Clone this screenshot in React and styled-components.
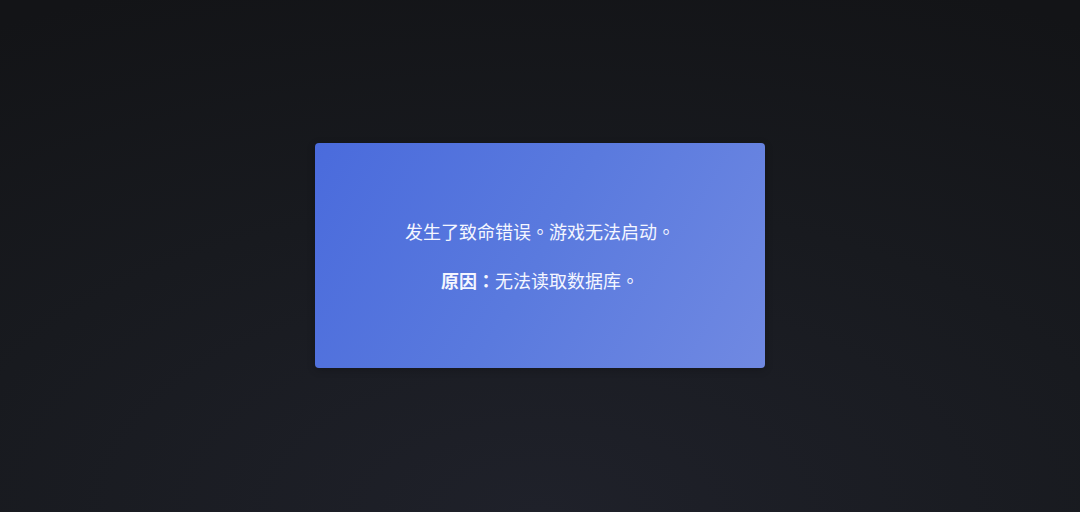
import React from 'react';
import styled, { createGlobalStyle } from 'styled-components';

const GlobalStyle = createGlobalStyle`
  html, body {
    margin: 0;
    padding: 0;
    height: 100%;
  }
  body {
    font-family: "Noto Sans", "Noto Sans CJK TC", sans-serif;
    background: #141518;
  }
  #root {
    height: 100%;
  }
`;

export default function App() {
  return (
    <>
      <GlobalStyle />
      <Screen>
        <ErrorCard>
          <Message>发生了致命错误。游戏无法启动。</Message>
          <Message>
            <Label>原因：</Label>无法读取数据库。
          </Message>
        </ErrorCard>
      </Screen>
    </>
  );
}

const Screen = styled.div`
  width: 100vw;
  height: 100vh;
  display: flex;
  align-items: center;
  justify-content: center;
  background: radial-gradient(ellipse 100% 110% at 50% 100%, #1f212a 0%, #181a1f 55%, #131417 100%);
`;

const ErrorCard = styled.div`
  width: 450px;
  height: 225px;
  margin-top: -1px;
  box-sizing: border-box;
  border-radius: 4px;
  background: linear-gradient(120deg, #4a6bdc 0%, #5a7ade 50%, #7089e2 100%);
  box-shadow: 0 2px 8px rgba(0, 0, 0, 0.2);
  display: flex;
  flex-direction: column;
  align-items: center;
  justify-content: center;
  gap: 22px;
  color: #f4f6ff;
`;

const Message = styled.p`
  margin: 0;
  font-size: 18px;
  line-height: 27px;
  font-family: "Noto Sans CJK TC", sans-serif;
  text-align: center;
`;

const Label = styled.span`
  font-weight: 700;
`;
